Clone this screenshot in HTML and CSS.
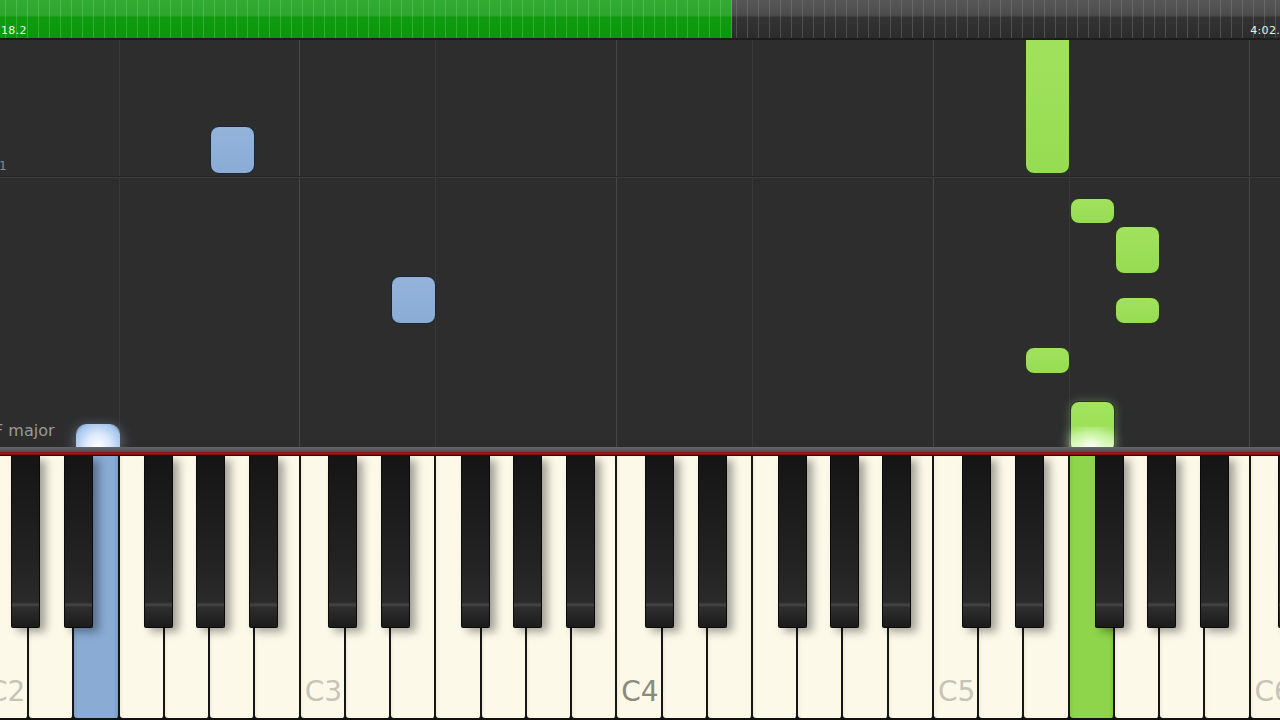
FILE: index.html
```html
<!DOCTYPE html>
<html>
<head>
<meta charset="utf-8">
<link rel="stylesheet" href="styles.css">
</head>
<body>
<div class="app">
  <div class="topbar">
    <div class="progress"></div>
    <div class="remain"></div>
    <div class="times"><span>18.2</span><span>4:02.</span></div>
  </div>
  <div class="roll">
    <div class="vline" style="left:119px"></div>
    <div class="vline c" style="left:299px"></div>
    <div class="vline" style="left:435px"></div>
    <div class="vline c" style="left:616px"></div>
    <div class="vline" style="left:752px"></div>
    <div class="vline c" style="left:933px"></div>
    <div class="vline" style="left:1069px"></div>
    <div class="vline c" style="left:1249px"></div>
    <div class="hline" style="top:136px"></div>
    <div class="measure">1</div>
    <div class="keysig">F major</div>

    <div class="note blue" style="left:210px;top:86px;height:48px"></div>
    <div class="note blue" style="left:391px;top:236px;height:48px"></div>
    <div class="note green tall" style="left:1025px;top:-14px;height:148px"></div>
    <div class="note green" style="left:1070px;top:158px;height:26px"></div>
    <div class="note green" style="left:1115px;top:186px;height:48px"></div>
    <div class="note green" style="left:1115px;top:257px;height:27px"></div>
    <div class="note green" style="left:1025px;top:307px;height:27px"></div>
    <div class="note green playing" style="left:1070px;top:361px;height:52px"></div>
    <div class="glow blueglow" style="left:76px"></div>
    <div class="glow greenglow" style="left:1069px"></div>
  </div>
  <div class="keyboard">
    <div class="kb-top"></div>
    <div class="keys">
      <div class="whites">
        <div class="wk"><span class="lbl">C2</span></div>
        <div class="wk"></div>
        <div class="wk pressed-blue"></div>
        <div class="wk"></div>
        <div class="wk"></div>
        <div class="wk"></div>
        <div class="wk"></div>
        <div class="wk"><span class="lbl">C3</span></div>
        <div class="wk"></div>
        <div class="wk"></div>
        <div class="wk"></div>
        <div class="wk"></div>
        <div class="wk"></div>
        <div class="wk"></div>
        <div class="wk"><span class="lbl mid">C4</span></div>
        <div class="wk"></div>
        <div class="wk"></div>
        <div class="wk"></div>
        <div class="wk"></div>
        <div class="wk"></div>
        <div class="wk"></div>
        <div class="wk"><span class="lbl">C5</span></div>
        <div class="wk"></div>
        <div class="wk"></div>
        <div class="wk pressed-green"></div>
        <div class="wk"></div>
        <div class="wk"></div>
        <div class="wk"></div>
        <div class="wk"><span class="lbl">C6</span></div>
      </div>
      <div class="bk" style="left:10.9px"></div>
      <div class="bk" style="left:63.9px"></div>
      <div class="bk" style="left:143.9px"></div>
      <div class="bk" style="left:196.4px"></div>
      <div class="bk" style="left:248.9px"></div>
      <div class="bk" style="left:327.6px"></div>
      <div class="bk" style="left:380.6px"></div>
      <div class="bk" style="left:460.6px"></div>
      <div class="bk" style="left:513.1px"></div>
      <div class="bk" style="left:565.6px"></div>
      <div class="bk" style="left:644.8px"></div>
      <div class="bk" style="left:697.8px"></div>
      <div class="bk" style="left:777.8px"></div>
      <div class="bk" style="left:830.3px"></div>
      <div class="bk" style="left:882.3px"></div>
      <div class="bk" style="left:961.5px"></div>
      <div class="bk" style="left:1014.5px"></div>
      <div class="bk" style="left:1094.5px"></div>
      <div class="bk" style="left:1147px"></div>
      <div class="bk" style="left:1199.5px"></div>
      <div class="bk" style="left:1278px"></div>
    </div>
  </div>
</div>
</body>
</html>
```

FILE: styles.css
```css
html, body {
  margin: 0;
  padding: 0;
  background: #2d2d2d;
}
body {
  width: 1280px;
  height: 720px;
  overflow: hidden;
  font-family: "DejaVu Sans", "Liberation Sans", sans-serif;
}
.app {
  width: 1280px;
  height: 720px;
  display: flex;
  flex-direction: column;
}

/* ---------- top progress bar ---------- */
.topbar {
  position: relative;
  height: 40px;
  display: flex;
  background: #1c1c1c;
  flex: 0 0 40px;
}
.progress {
  width: 732px;
  height: 38px;
  background:
    repeating-linear-gradient(90deg, transparent 0 5px, rgba(140,220,130,0.3) 5px 6px, transparent 6px 11px),
    linear-gradient(180deg, #34ac34 0%, #2ea52e 40%, #0f9a0f 46%, #0b970b 100%);
}
.remain {
  flex: 1;
  height: 38px;
  background:
    repeating-linear-gradient(90deg, transparent 0 4px, rgba(140,140,140,0.35) 4px 5px, transparent 5px 11px),
    linear-gradient(180deg, #575757 0%, #4c4c4c 40%, #333333 46%, #2c2c2c 100%);
}
.times {
  position: absolute;
  left: 1px;
  right: 0;
  top: 24px;
  display: flex;
  justify-content: space-between;
  font-size: 11px;
  color: #e8f5e8;
  letter-spacing: 0.3px;
}

/* ---------- falling notes ---------- */
.roll {
  position: relative;
  flex: 0 0 407px;
  background: #2d2d2e;
  overflow: hidden;
}
.vline {
  position: absolute;
  top: 0;
  bottom: 0;
  width: 1px;
  background: #383838;
}
.vline.c {
  background: #474747;
}
.hline {
  position: absolute;
  left: 0;
  right: 0;
  height: 2px;
  background: linear-gradient(180deg, #262626 0 1px, #3c3c3c 1px 2px);
}
.measure {
  position: absolute;
  left: -1px;
  top: 119px;
  font-size: 12px;
  color: #8a8a8a;
}
.keysig {
  position: absolute;
  left: -6px;
  top: 381px;
  font-size: 16px;
  color: #9a9a9a;
}
.note {
  position: absolute;
  width: 45px;
  box-sizing: border-box;
  border-radius: 9px;
}
.note.blue {
  background: linear-gradient(180deg, #93b3da, #8aacd5);
  border: 1px solid #1c2535;
}
.note.green {
  background: linear-gradient(180deg, #a2e25e, #96dc52);
  border: 1px solid #26361a;
}
.note.tall {
  border-radius: 0 0 9px 9px;
}
.note.playing {
  box-shadow: 0 0 10px rgba(190, 255, 150, 0.3);
  background: linear-gradient(180deg, #a4e460 0%, #9be055 55%, #c8f3a0 80%, #e6ffd6 100%);
}
.glow {
  position: absolute;
  width: 44px;
  border-radius: 10px 10px 0 0;
}
.blueglow {
  top: 384px;
  height: 23px;
  background: radial-gradient(ellipse at 50% 100%, #ffffff 0%, #dbeafc 40%, #a3c3ec 78%, rgba(140,180,230,0.2) 100%);
  box-shadow: 0 4px 14px rgba(200, 225, 255, 0.45);
}
.greenglow {
  top: 387px;
  height: 20px;
  background: radial-gradient(ellipse at 50% 100%, rgba(255,255,255,0.9) 0%, rgba(230,255,210,0.6) 40%, rgba(200,255,150,0) 100%);
  box-shadow: 0 6px 12px rgba(220, 255, 200, 0.4);
  border-radius: 0;
}

/* ---------- keyboard ---------- */
.keyboard {
  flex: 1;
  display: flex;
  flex-direction: column;
  background: #111;
}
.kb-top {
  height: 9px;
  flex: 0 0 9px;
  background: linear-gradient(180deg, #666 0px, #4e4e4e 5px, #7a1010 5px, #c01616 7px, #3a0808 8px, #0e0e0e 9px);
}
.keys {
  position: relative;
  flex: 1;
  overflow: hidden;
}
.whites {
  display: flex;
  height: 262px;
  margin-left: -16px;
}
.wk {
  flex: 0 0 45.24px;
  box-sizing: border-box;
  height: 100%;
  border-right: 2px solid #161616;
  border-radius: 0 0 3px 3px;
  background: linear-gradient(90deg, #f3efdc 0px, #fdf9e9 4px, #fdf9e9 100%);
  display: flex;
  align-items: flex-end;
}
.wk.pressed-blue {
  background: linear-gradient(90deg, #7ea0c9 0px, #89abd4 4px, #89abd4 90%, #7a9cc5 100%);
}
.wk.pressed-green {
  background: linear-gradient(90deg, #86cc44 0px, #8fd54b 4px, #8fd54b 90%, #82c840 100%);
}
.lbl {
  font-size: 28px;
  line-height: 1;
  color: #c6c4b6;
  margin: 0 0 12px 4px;
}
.lbl.mid {
  color: #8b897e;
}
.bk {
  position: absolute;
  top: 0;
  width: 29px;
  height: 172px;
  box-sizing: border-box;
  border: 1px solid #0a0a0a;
  border-top: none;
  border-radius: 0 0 2px 2px;
  background: linear-gradient(180deg, #151515 0px, #222 60%, #2a2a2a 146px, #474747 149px, #2e2e2e 151px, #1c1c1c 170px);
  box-shadow: 6px 4px 8px rgba(0, 0, 0, 0.35);
}
```
